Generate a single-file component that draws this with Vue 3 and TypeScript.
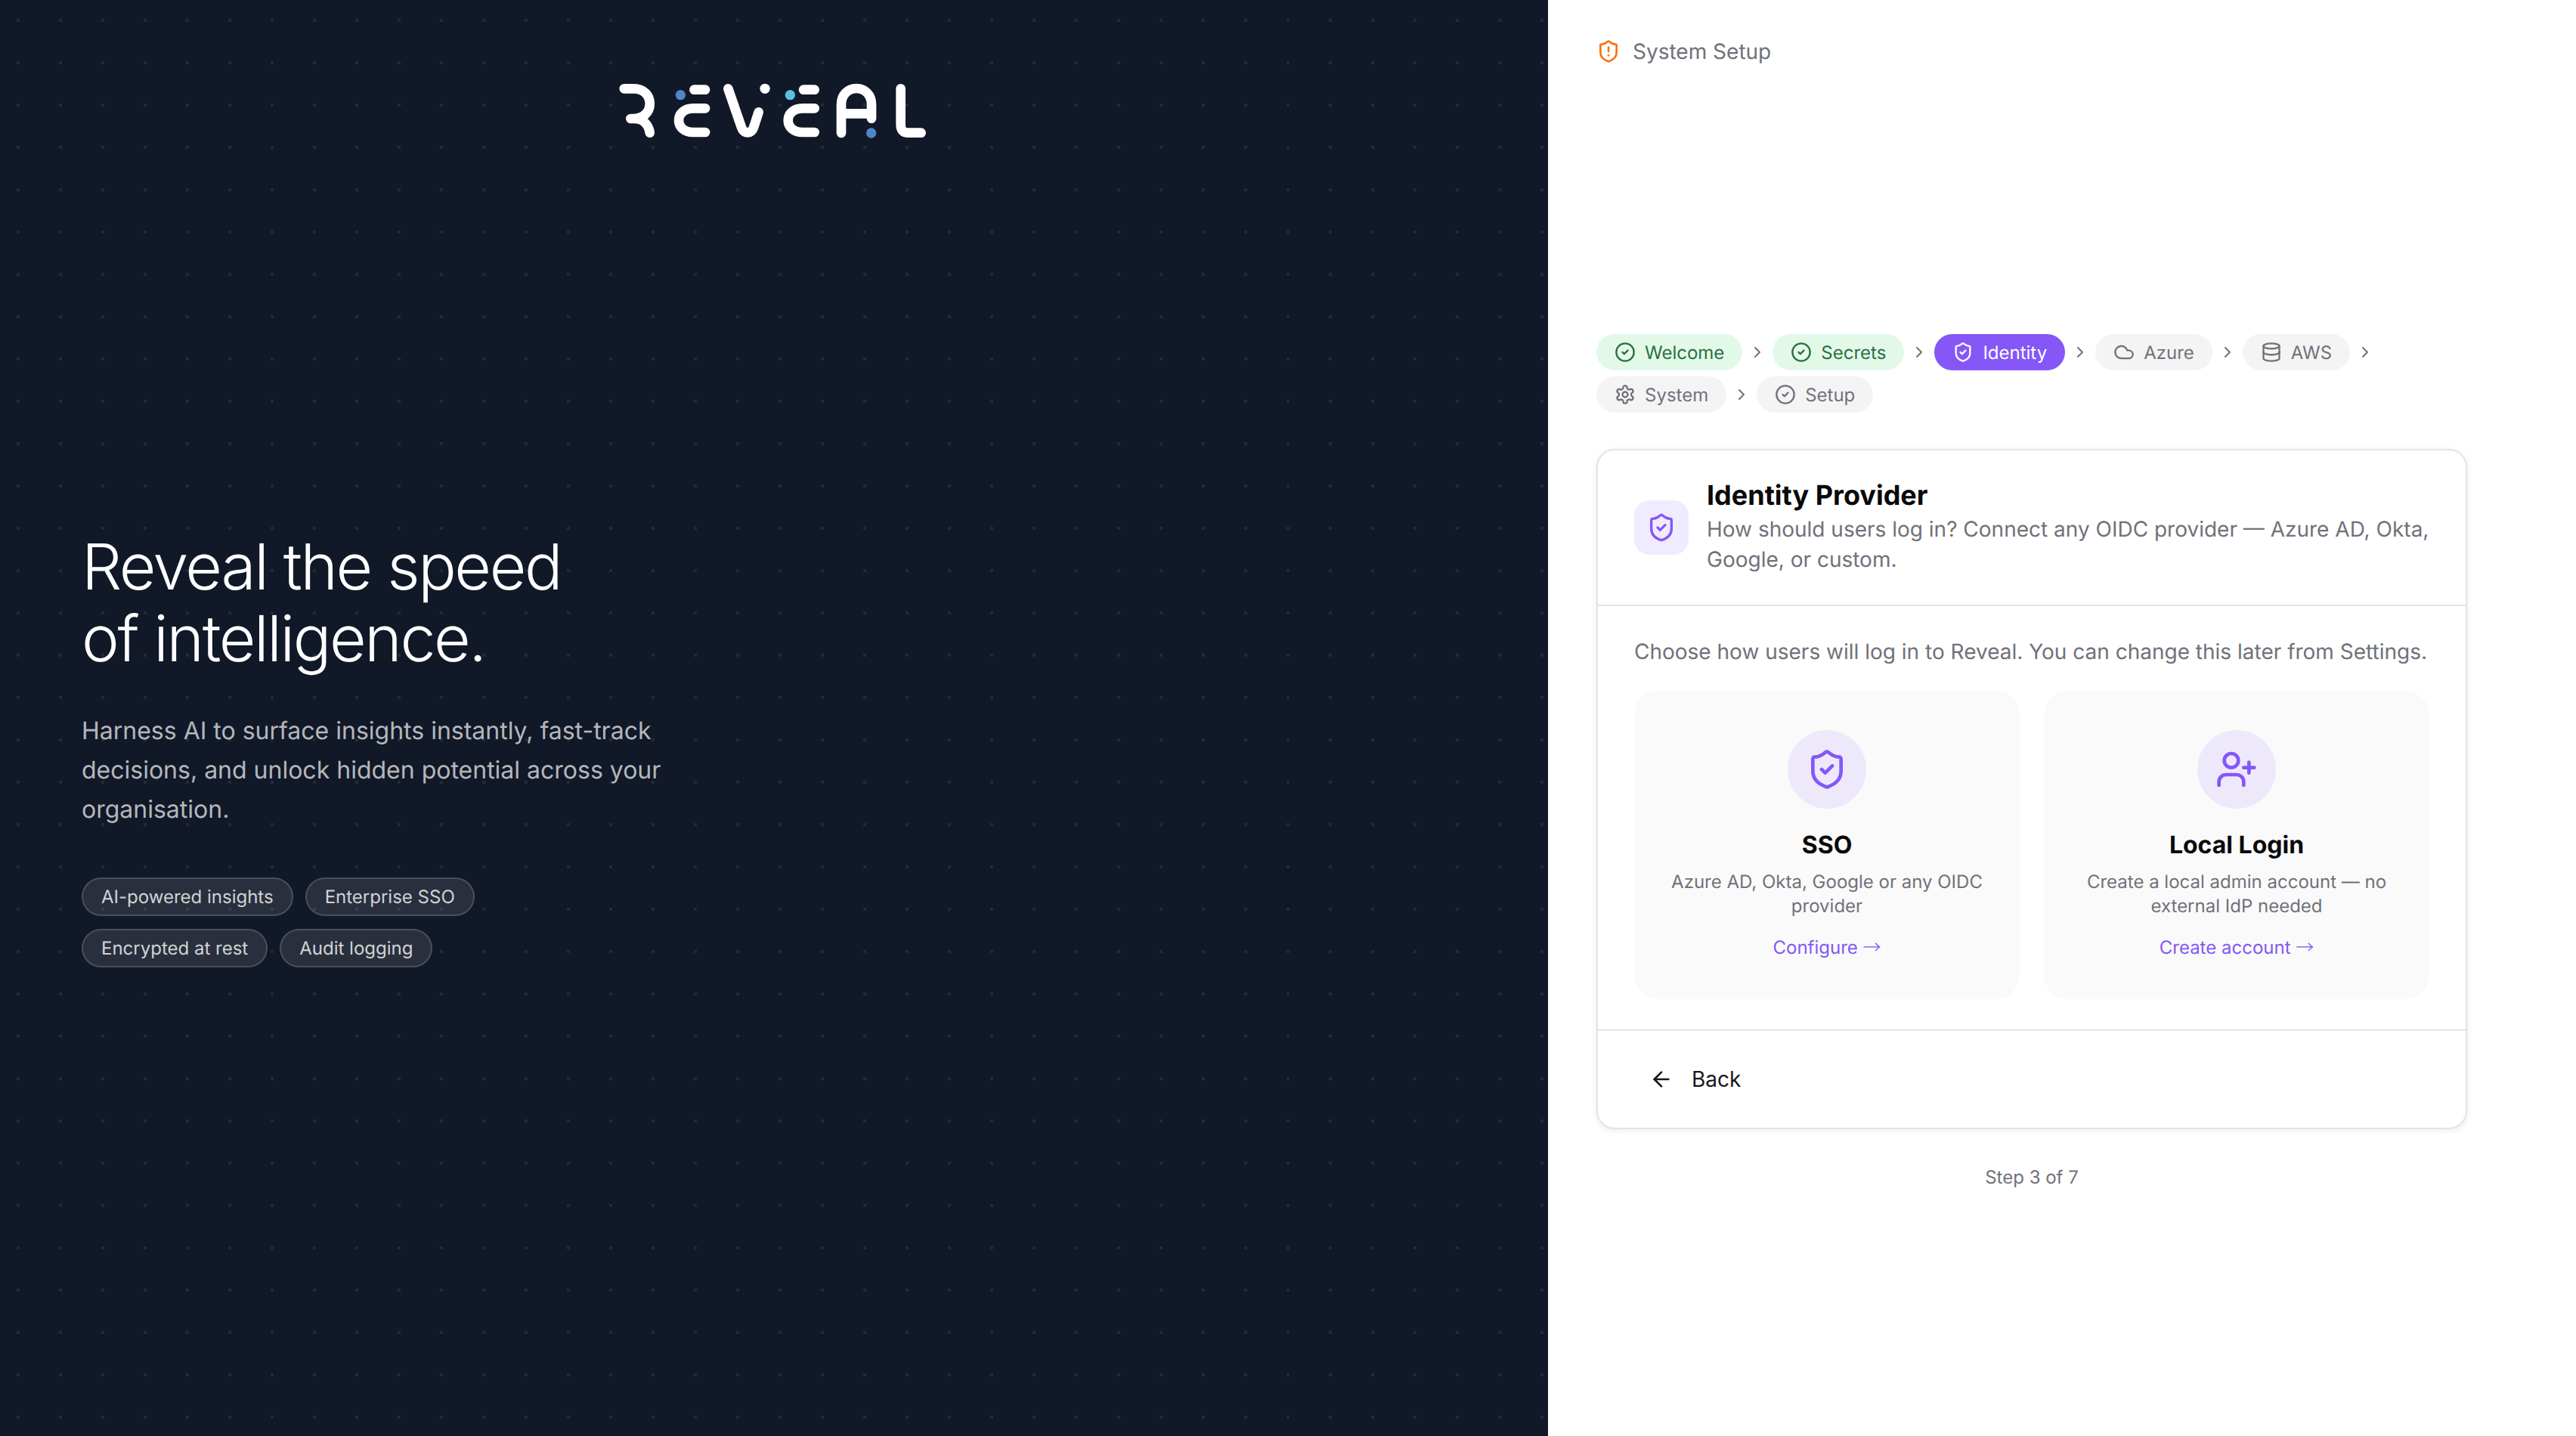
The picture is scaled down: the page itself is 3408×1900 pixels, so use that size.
<script setup lang="ts">
type Step = { label: string; icon: string; state: 'done' | 'active' | 'todo' }

const shield =
  'M20 13c0 5-3.5 7.5-7.66 8.95a1 1 0 0 1-.67-.01C7.5 20.5 4 18 4 13V6a1 1 0 0 1 1-1c2 0 4.5-1.2 6.24-2.72a1.17 1.17 0 0 1 1.52 0C14.51 3.81 17 5 19 5a1 1 0 0 1 1 1z'

const icons: Record<string, string[]> = {
  check: ['M22 12a10 10 0 1 1-20 0 10 10 0 0 1 20 0z', 'm9 12 2 2 4-4'],
  shield: [shield, 'm9 12 2 2 4-4'],
  cloud: ['M17.5 19H9a7 7 0 1 1 6.71-9h1.79a4.5 4.5 0 1 1 0 9Z'],
  database: [
    'M21 5c0 1.66-4.03 3-9 3S3 6.66 3 5s4.03-3 9-3 9 1.34 9 3z',
    'M3 5V19A9 3 0 0 0 21 19V5',
    'M3 12A9 3 0 0 0 21 12',
  ],
  settings: [
    'M12.22 2h-.44a2 2 0 0 0-2 2v.18a2 2 0 0 1-1 1.73l-.43.25a2 2 0 0 1-2 0l-.15-.08a2 2 0 0 0-2.73.73l-.22.38a2 2 0 0 0 .73 2.73l.15.1a2 2 0 0 1 1 1.72v.51a2 2 0 0 1-1 1.74l-.15.09a2 2 0 0 0-.73 2.73l.22.38a2 2 0 0 0 2.73.73l.15-.08a2 2 0 0 1 2 0l.43.25a2 2 0 0 1 1 1.73V20a2 2 0 0 0 2 2h.44a2 2 0 0 0 2-2v-.18a2 2 0 0 1 1-1.73l.43-.25a2 2 0 0 1 2 0l.15.08a2 2 0 0 0 2.73-.73l.22-.39a2 2 0 0 0-.73-2.73l-.15-.08a2 2 0 0 1-1-1.74v-.5a2 2 0 0 1 1-1.74l.15-.09a2 2 0 0 0 .73-2.73l-.22-.38a2 2 0 0 0-2.73-.73l-.15.08a2 2 0 0 1-2 0l-.43-.25a2 2 0 0 1-1-1.73V4a2 2 0 0 0-2-2z',
    'M15 12a3 3 0 1 1-6 0 3 3 0 0 1 6 0z',
  ],
  alert: [shield, 'M12 8v4', 'M12 16h.01'],
  userPlus: [
    'M16 21v-2a4 4 0 0 0-4-4H6a4 4 0 0 0-4 4v2',
    'M13 7a4 4 0 1 1-8 0 4 4 0 0 1 8 0z',
    'M19 8v6',
    'M22 11h-6',
  ],
}

const steps: Step[] = [
  { label: 'Welcome', icon: 'check', state: 'done' },
  { label: 'Secrets', icon: 'check', state: 'done' },
  { label: 'Identity', icon: 'shield', state: 'active' },
  { label: 'Azure', icon: 'cloud', state: 'todo' },
  { label: 'AWS', icon: 'database', state: 'todo' },
  { label: 'System', icon: 'settings', state: 'todo' },
  { label: 'Setup', icon: 'check', state: 'todo' },
]

const tags = ['AI-powered insights', 'Enterprise SSO', 'Encrypted at rest', 'Audit logging']

const options = [
  {
    title: 'SSO',
    icon: 'shield',
    text: 'Azure AD, Okta, Google or any OIDC provider',
    link: 'Configure',
  },
  {
    title: 'Local Login',
    icon: 'userPlus',
    text: 'Create a local admin account — no external IdP needed',
    link: 'Create account',
  },
]
</script>

<template>
  <div class="page">
    <section class="brand">
      <svg class="logo" viewBox="170 115 1230 230" fill="none" role="img" aria-label="Reveal">
        <g stroke="#fff" stroke-width="38" stroke-linecap="round" stroke-linejoin="round">
          <path d="M196 143H235C275 143 298 170 298 203C298 238 270 262 235 262H222M235 262C270 262 293 285 298 318" />
          <path d="M474 147H518M518 221H470C435 221 413 243 413 268C413 296 435 316 470 316H518" />
          <path d="M609 143L662 297C670 324 702 324 710 297L730 236" />
          <path d="M908 147H952M952 221H904C869 221 847 243 847 268C847 296 869 316 904 316H952" />
          <path d="M1058 319V205C1058 168 1084 142 1118 142C1152 142 1178 168 1178 205V261M1058 242H1178" />
          <path d="M1294 143V285C1294 308 1304 318 1325 318H1375" />
        </g>
        <circle cx="420" cy="168" r="20" fill="#4f86c6" />
        <circle cx="755" cy="143" r="20" fill="#fff" />
        <circle cx="855" cy="168" r="20" fill="#5bbfe6" />
        <circle cx="1177" cy="319" r="20" fill="#4f86c6" />
      </svg>
      <div class="hero">
        <h1>Reveal the speed<br />of intelligence.</h1>
        <p>Harness AI to surface insights instantly, fast-track decisions, and unlock hidden potential across your organisation.</p>
        <div class="tags">
          <span v-for="t in tags" :key="t" class="tag">{{ t }}</span>
        </div>
      </div>
    </section>

    <section class="setup">
      <header class="top">
        <svg class="icon top-icon" viewBox="0 0 24 24"><path v-for="d in icons.alert" :key="d" :d="d" /></svg>
        <span>System Setup</span>
      </header>

      <nav class="steps">
        <template v-for="(s, i) in steps" :key="s.label">
          <div class="step-wrap">
            <span class="step" :class="s.state">
              <svg class="icon step-icon" viewBox="0 0 24 24"><path v-for="d in icons[s.icon]" :key="d" :d="d" /></svg>
              {{ s.label }}
            </span>
            <svg v-if="i < steps.length - 1" class="icon chevron" viewBox="0 0 24 24"><path d="m9 18 6-6-6-6" /></svg>
          </div>
        </template>
      </nav>

      <div class="card">
        <div class="card-head">
          <div class="head-icon">
            <svg class="icon" viewBox="0 0 24 24"><path v-for="d in icons.shield" :key="d" :d="d" /></svg>
          </div>
          <div>
            <h2>Identity Provider</h2>
            <p>How should users log in? Connect any OIDC provider — Azure AD, Okta, Google, or custom.</p>
          </div>
        </div>

        <div class="card-body">
          <p class="intro">Choose how users will log in to Reveal. You can change this later from Settings.</p>
          <div class="options">
            <div v-for="o in options" :key="o.title" class="option">
              <div class="option-icon">
                <svg class="icon" viewBox="0 0 24 24"><path v-for="d in icons[o.icon]" :key="d" :d="d" /></svg>
              </div>
              <h3>{{ o.title }}</h3>
              <p>{{ o.text }}</p>
              <a class="link">{{ o.link }} <span class="arrow">→</span></a>
            </div>
          </div>
        </div>

        <div class="card-foot">
          <button class="back">
            <svg class="icon" viewBox="0 0 24 24"><path d="m12 19-7-7 7-7" /><path d="M19 12H5" /></svg>
            Back
          </button>
        </div>
      </div>

      <p class="count">Step 3 of 7</p>
    </section>
  </div>
</template>

<style>
html,
body {
  margin: 0;
  background: #fff;
}
</style>

<style scoped>
.page {
  display: grid;
  grid-template-columns: 2048px 1fr;
  height: 1900px;
  overflow: hidden;
  font-family: Inter, 'Liberation Sans', sans-serif;
  text-rendering: geometricPrecision;
}

.brand {
  display: flex;
  flex-direction: column;
  box-sizing: border-box;
  padding: 108px 112px 0 108px;
  background-color: #111827;
  background-image: radial-gradient(circle, rgba(255, 255, 255, 0.08) 2px, transparent 2.5px);
  background-size: 56px 56px;
  background-position: -4px -1px;
  color: #fff;
}

.logo {
  align-self: center;
  width: 410px;
  height: 76.67px;
  flex: none;
}

.hero {
  margin-top: 518px;
}

.hero h1 {
  margin: 0;
  font-size: 84px;
  line-height: 95px;
  font-weight: 300;
  letter-spacing: -0.028em;
}

.hero p {
  width: 800px;
  margin: 48px 0 0;
  font-size: 32px;
  line-height: 52px;
  color: rgba(255, 255, 255, 0.7);
}

.tags {
  display: flex;
  flex-wrap: wrap;
  gap: 17px 16px;
  width: 700px;
  margin-top: 64px;
}

.tag {
  display: flex;
  align-items: center;
  box-sizing: border-box;
  height: 51px;
  padding: 1px 24px 0;
  border: 2px solid rgba(255, 255, 255, 0.16);
  border-radius: 999px;
  background: rgba(255, 255, 255, 0.1);
  font-size: 24px;
  color: rgba(255, 255, 255, 0.8);
}

.setup {
  box-sizing: border-box;
  padding: 48px 144px 0 64px;
  min-width: 0;
}

.icon {
  display: block;
  flex: none;
  fill: none;
  stroke: currentColor;
  stroke-width: 2;
  stroke-linecap: round;
  stroke-linejoin: round;
}

.top {
  display: flex;
  align-items: center;
  gap: 16px;
  height: 40px;
  font-size: 28px;
  color: #71717a;
}

.top-icon {
  width: 32px;
  height: 32px;
  color: #f97316;
}

.steps {
  display: flex;
  flex-wrap: wrap;
  gap: 8px;
  margin-top: 354px;
}

.step-wrap {
  display: flex;
  align-items: center;
  gap: 8px;
}

.step {
  display: flex;
  align-items: center;
  gap: 12px;
  box-sizing: border-box;
  height: 48px;
  padding: 0 24px;
  border-radius: 999px;
  font-size: 24px;
}

.step-icon {
  width: 28px;
  height: 28px;
}

.step.done {
  background: #e2f9ea;
  color: #2a6f3f;
}

.step.active {
  background: #8557f6;
  color: #fff;
}

.step.todo {
  background: #f4f4f5;
  color: #71717a;
}

.chevron {
  width: 24px;
  height: 24px;
  color: #71717a;
}

.card {
  margin-top: 48px;
  border: 2px solid #e4e4e7;
  border-radius: 24px;
  background: #fff;
  box-shadow: 0 2px 8px rgba(0, 0, 0, 0.08);
}

.card-head {
  display: flex;
  align-items: center;
  gap: 24px;
  padding: 40px 48px;
  border-bottom: 2px solid #e4e4e7;
}

.head-icon {
  display: flex;
  align-items: center;
  justify-content: center;
  flex: none;
  width: 72px;
  height: 72px;
  border-radius: 20px;
  background: #f0ebff;
  color: #8557f6;
}

.head-icon .icon {
  width: 40px;
  height: 40px;
}

.card-head h2 {
  margin: 0 0 6px;
  font-size: 36px;
  line-height: 38px;
  font-weight: 700;
  color: #09090b;
}

.card-head p {
  margin: 0;
  font-size: 28px;
  line-height: 40px;
  color: #71717a;
}

.card-body {
  padding: 40px 48px;
  border-bottom: 2px solid #e4e4e7;
}

.intro {
  margin: 0 0 32px;
  font-size: 28px;
  line-height: 40px;
  color: #71717a;
}

.options {
  display: grid;
  grid-template-columns: 1fr 1fr;
  gap: 32px;
}

.option {
  display: flex;
  flex-direction: column;
  align-items: center;
  padding: 52px 48px;
  border-radius: 32px;
  background: #fafafa;
  text-align: center;
}

.option-icon {
  display: flex;
  align-items: center;
  justify-content: center;
  width: 104px;
  height: 104px;
  border-radius: 50%;
  background: #ede9fb;
  color: #8557f6;
}

.option-icon .icon {
  width: 56px;
  height: 56px;
}

.option h3 {
  margin: 28px 0 13px;
  font-size: 32px;
  line-height: 40px;
  font-weight: 700;
  color: #09090b;
}

.option p {
  margin: 0 0 23px;
  font-size: 24px;
  line-height: 32px;
  color: #71717a;
}

.link {
  display: block;
  height: 32px;
  font-size: 24px;
  line-height: 32px;
  color: #8557f6;
}

.arrow {
  font-family: 'Noto Sans CJK JP', sans-serif;
  font-weight: 300;
  line-height: 0;
}

.card-foot {
  display: flex;
  align-items: center;
  height: 128px;
  padding: 0 48px;
}

.back {
  display: flex;
  align-items: center;
  gap: 24px;
  padding: 0 20px;
  border: 0;
  background: none;
  font: inherit;
  font-size: 28px;
  color: #18181b;
}

.back .icon {
  width: 32px;
  height: 32px;
}

.count {
  margin: 48px 0 0;
  font-size: 24px;
  line-height: 32px;
  text-align: center;
  color: #71717a;
}
</style>
